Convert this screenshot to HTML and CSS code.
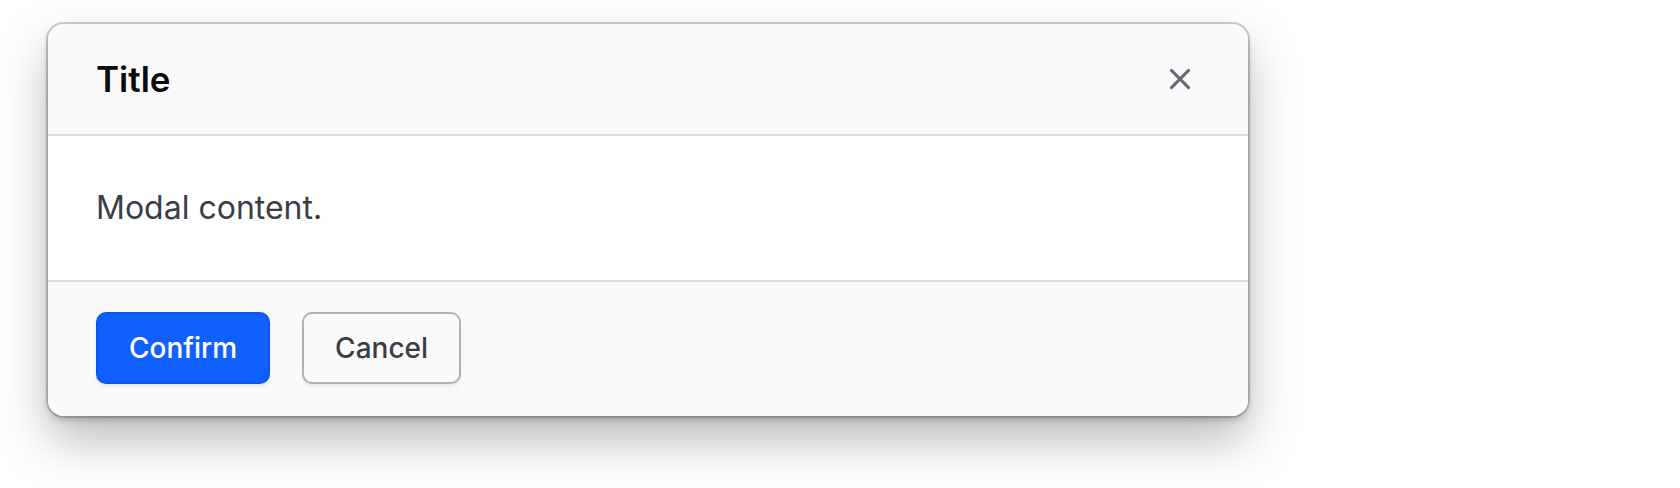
FILE: index.html
```
<!DOCTYPE html>
<html lang="en">
<head>
<meta charset="utf-8">
<meta name="viewport" content="width=device-width, initial-scale=1">
<title>Modal</title>
<link rel="stylesheet" href="styles.css">
</head>
<body>
<main class="page">
  <section class="modal" role="dialog" aria-labelledby="modal-title">
    <header class="modal-header">
      <h1 class="modal-title" id="modal-title">Title</h1>
      <button class="dismiss" type="button" aria-label="Close">
        <svg class="dismiss-icon" viewBox="0 0 32 32" aria-hidden="true"><path d="M7.4 7.4l17.2 17.2M24.6 7.4L7.4 24.6"/></svg>
      </button>
    </header>
    <div class="modal-body">
      <p class="modal-text">Modal content.</p>
    </div>
    <footer class="modal-footer">
      <button class="button button-primary" type="button">Confirm</button>
      <button class="button button-secondary" type="button">Cancel</button>
    </footer>
  </section>
</main>
</body>
</html>
```

FILE: styles.css
```
* {
  box-sizing: border-box;
}

body {
  margin: 0;
  background: #fff;
  color: #3b3d45;
  font-family: Inter, "Liberation Sans", sans-serif;
}

.page {
  min-height: 100vh;
  padding: 24px 48px 72px;
}

.modal {
  max-width: 1200px;
  border-radius: 16px;
  background: #fff;
  box-shadow:
    0 0 0 2px #3b3d4540,
    0 4px 6px #3b3d4540,
    0 24px 48px #3b3d4559;
}

.modal-header {
  display: flex;
  align-items: center;
  justify-content: space-between;
  padding: 32px 48px;
  border-bottom: 2px solid #dbdbdf;
  border-radius: 16px 16px 0 0;
  background: #fafafa;
}

.modal-title {
  margin: 0;
  color: #0c0c0e;
  font-size: 35px;
  font-weight: 600;
  line-height: 46px;
}

.dismiss {
  display: flex;
  align-items: center;
  justify-content: center;
  width: 40px;
  height: 40px;
  padding: 0;
  border: 0;
  background: transparent;
  color: #656a76;
}

.dismiss-icon {
  width: 32px;
  height: 32px;
  fill: none;
  stroke: currentColor;
  stroke-width: 3;
  stroke-linecap: round;
}

.modal-body {
  padding: 48px;
}

.modal-text {
  margin: 0;
  font-size: 32px;
  line-height: 48px;
}

.modal-footer {
  display: flex;
  gap: 32px;
  padding: 30px 48px 32px;
  border-top: 2px solid #dbdbdf;
  border-radius: 0 0 16px 16px;
  background: #fafafa;
}

.button {
  padding: 10px 31px;
  border: 2px solid;
  border-radius: 10px;
  font-family: inherit;
  font-size: 28px;
  font-weight: 500;
  line-height: 48px;
  box-shadow: 0 2px 2px #656a760d, 0 4px 4px #656a760d;
}

.button-primary {
  border-color: #0c56e9;
  background: #1060ff;
  color: #fff;
}

.button-secondary {
  border-color: #656a7680;
  background: #fafafa;
  color: #3b3d45;
}
```
